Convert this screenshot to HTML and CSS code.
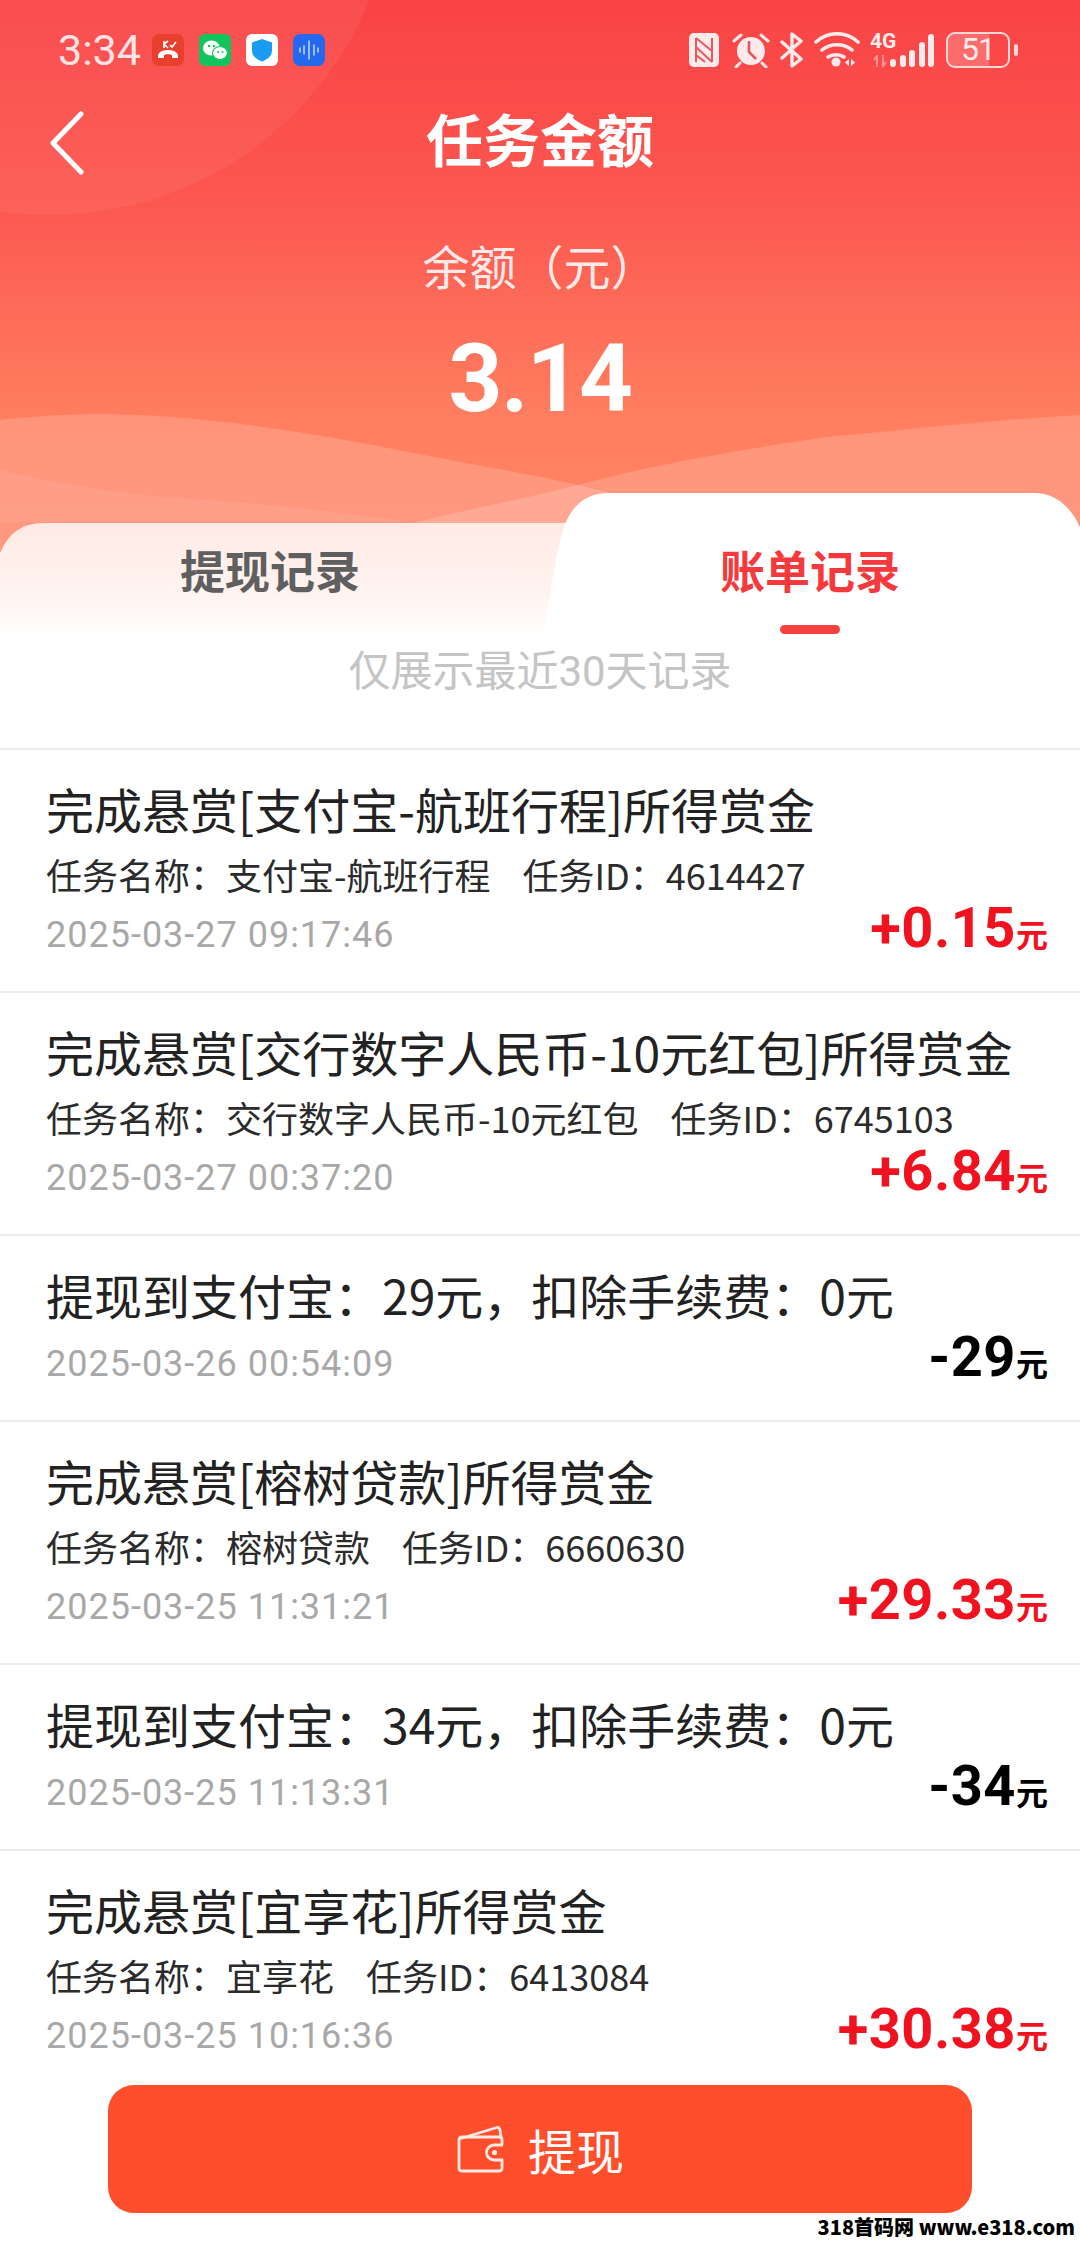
FILE: index.html
```html
<!DOCTYPE html>
<html lang="zh">
<head>
  <meta charset="UTF-8" />
  <title>任务金额</title>
  <link rel="stylesheet" href="styles.css">
</head>
<body>
  <div class="page">
    <header class="hero">
      <svg class="hero-bg" width="1080" height="640" viewBox="0 0 1080 640">
        <defs>
          <linearGradient id="heroGrad" x1="0" y1="0" x2="0" y2="1">
            <stop offset="0" stop-color="#f94345"/>
            <stop offset="0.31" stop-color="#fc5750"/>
            <stop offset="0.66" stop-color="#ff7f60"/>
            <stop offset="1" stop-color="#ff8a6c"/>
          </linearGradient>
          <linearGradient id="tabGrad" x1="0" y1="0" x2="0" y2="1">
            <stop offset="0" stop-color="#fff" stop-opacity="0.8"/>
            <stop offset="0.6" stop-color="#fff" stop-opacity="0.88"/>
            <stop offset="1" stop-color="#fff" stop-opacity="1"/>
          </linearGradient>
        </defs>
        <rect width="1080" height="640" fill="url(#heroGrad)"/>
        <circle cx="50" cy="-130" r="345" fill="#fff" fill-opacity="0.055"/>
        <path d="M0 420C60 413 120 413 172 417C260 424 340 438 413 453C470 464 530 474 578 485C620 495 680 510 720 530V640H0Z" fill="#fff" fill-opacity="0.17"/>
        <path d="M0 470C70 488 140 496 207 500C280 505 350 514 413 522H0Z" fill="#fff" fill-opacity="0.07"/>
        <path d="M1080 415C990 420 905 430 826 437C740 450 650 465 578 485C520 500 465 510 413 523H1080Z" fill="#fff" fill-opacity="0.17"/>
        <path d="M0 640V553C8 535 20 523 44 523H566V640Z" fill="url(#tabGrad)"/>
        <path d="M543 640C550 600 554 560 563 530C571 505 586 493 610 493H1034C1058 493 1072 510 1080 527V640Z" fill="#fff"/>
      </svg>

      <div class="status">
        <div class="status-left">
          <span class="time">3:34</span>
          <svg class="app-icon" width="32" height="32" viewBox="0 0 32 32">
            <rect width="32" height="32" rx="7" fill="#e8402c"/>
            <path d="M6 22c0-8 20-8 20 0v2h-6v-3c-2-1-6-1-8 0v3H6z" fill="#fff"/>
            <path d="M12 7v7M12 10l4-3M12 10l4 4M18 11l2 2 4-5" stroke="#fff" stroke-width="1.6" fill="none"/>
          </svg>
          <svg class="app-icon" width="32" height="32" viewBox="0 0 32 32">
            <rect width="32" height="32" rx="6" fill="#12c45c"/>
            <ellipse cx="12.5" cy="14" rx="8.5" ry="7.5" fill="#fff"/>
            <ellipse cx="21" cy="19" rx="7.5" ry="6.5" fill="#fff" stroke="#12c45c" stroke-width="1.2"/>
            <circle cx="10" cy="12" r="1.2" fill="#12c45c"/>
            <circle cx="15" cy="12" r="1.2" fill="#12c45c"/>
            <circle cx="19" cy="18" r="1" fill="#12c45c"/>
            <circle cx="23.5" cy="18" r="1" fill="#12c45c"/>
          </svg>
          <svg class="app-icon" width="32" height="32" viewBox="0 0 32 32">
            <rect width="32" height="32" rx="6" fill="#fff"/>
            <path d="M16 5l10 3.5v8c0 6-5 9-10 11-5-2-10-5-10-11v-8z" fill="#1a9cf0"/>
          </svg>
          <svg class="app-icon" width="32" height="32" viewBox="0 0 32 32">
            <rect width="32" height="32" rx="7" fill="#2468ee"/>
            <path d="M7 14v4M11 12v8M16 7v18M21 11v10M25 14v4" stroke="#cfe0ff" stroke-width="1.4" stroke-linecap="round"/>
          </svg>
        </div>
        <div class="status-right">
          <svg class="nfc" width="30" height="34" viewBox="0 0 30 34">
            <rect width="30" height="34" rx="5" fill="#fdeaea"/>
            <path d="M7 5v24M23 5v24M7 5l16 13M7 14l16 15M7 22l9 7" stroke="#e9575a" stroke-width="2" fill="none"/>
          </svg>
          <svg width="38" height="36" viewBox="0 0 38 36">
            <circle cx="19" cy="19" r="14" fill="#fdeaea"/>
            <path d="M17 9v11l7 7" stroke="#e9575a" stroke-width="2.6" fill="none"/>
            <path d="M2 9l7-6M36 9l-7-6M8 31l-4 4M30 31l4 4" stroke="#fdeaea" stroke-width="3" stroke-linecap="round"/>
          </svg>
          <svg width="24" height="36" viewBox="0 0 24 36">
            <path d="M2 26L21 9 12 2v32l9-7L2 10" stroke="#fdeaea" stroke-width="3.4" fill="none" stroke-linejoin="round" stroke-linecap="round"/>
          </svg>
          <svg width="46" height="36" viewBox="0 0 46 36">
            <path d="M2 10c12-11 30-11 42 0M8 18c8-7 22-7 30 0M14 25c4-3 12-3 16 0" stroke="#fdeaea" stroke-width="3.6" fill="none" stroke-linecap="round"/>
            <circle cx="22" cy="30" r="4.5" fill="#fdeaea"/>
            <path d="M35 27v7l-4-3.5zM37 27v7l4-3.5z" fill="#fdeaea"/>
          </svg>
          <div class="signal">
            <span class="net-label">4G</span>
            <svg class="net-arrows" width="14" height="12" viewBox="0 0 14 12">
              <path d="M4 12V1L1 5M10 0v11l3-4" stroke="#fdeaea" stroke-width="2" fill="none"/>
            </svg>
            <div class="bars">
              <i class="bar bar-1"></i><i class="bar bar-2"></i><i class="bar bar-3"></i><i class="bar bar-4"></i><i class="bar bar-5"></i>
            </div>
          </div>
          <div class="battery">
            <div class="battery-body">
              <span class="battery-level"></span>
              <span class="battery-num">51</span>
            </div>
            <i class="battery-nub"></i>
          </div>
        </div>
      </div>

      <div class="nav">
        <svg class="back" width="36" height="64" viewBox="0 0 36 64">
          <path d="M32 3L4 32l28 29" stroke="#fff" stroke-width="5" fill="none" stroke-linecap="round" stroke-linejoin="round"/>
        </svg>
        <h1>任务金额</h1>
      </div>

      <div class="balance">
        <div class="balance-label">余额（元）</div>
        <div class="balance-num">3.14</div>
      </div>

      <div class="tabs">
        <div class="tab">提现记录</div>
        <div class="tab tab-active">账单记录<i class="tab-line"></i></div>
      </div>
    </header>

    <div class="hint">仅展示最近30天记录</div>

    <div class="list">
      <div class="row">
        <div class="row-title">完成悬赏[支付宝-航班行程]所得赏金</div>
        <div class="row-sub"><span>任务名称：支付宝-航班行程</span><span>任务ID：4614427</span></div>
        <div class="row-foot"><span class="row-date">2025-03-27 09:17:46</span><span class="amount plus">+0.15<small>元</small></span></div>
      </div>
      <div class="row">
        <div class="row-title">完成悬赏[交行数字人民币-10元红包]所得赏金</div>
        <div class="row-sub"><span>任务名称：交行数字人民币-10元红包</span><span>任务ID：6745103</span></div>
        <div class="row-foot"><span class="row-date">2025-03-27 00:37:20</span><span class="amount plus">+6.84<small>元</small></span></div>
      </div>
      <div class="row">
        <div class="row-title">提现到支付宝：29元，扣除手续费：0元</div>
        <div class="row-foot"><span class="row-date">2025-03-26 00:54:09</span><span class="amount">-29<small>元</small></span></div>
      </div>
      <div class="row">
        <div class="row-title">完成悬赏[榕树贷款]所得赏金</div>
        <div class="row-sub"><span>任务名称：榕树贷款</span><span>任务ID：6660630</span></div>
        <div class="row-foot"><span class="row-date">2025-03-25 11:31:21</span><span class="amount plus">+29.33<small>元</small></span></div>
      </div>
      <div class="row">
        <div class="row-title">提现到支付宝：34元，扣除手续费：0元</div>
        <div class="row-foot"><span class="row-date">2025-03-25 11:13:31</span><span class="amount">-34<small>元</small></span></div>
      </div>
      <div class="row">
        <div class="row-title">完成悬赏[宜享花]所得赏金</div>
        <div class="row-sub"><span>任务名称：宜享花</span><span>任务ID：6413084</span></div>
        <div class="row-foot"><span class="row-date">2025-03-25 10:16:36</span><span class="amount plus">+30.38<small>元</small></span></div>
      </div>
    </div>

    <div class="withdraw">
      <svg width="50" height="48" viewBox="0 0 50 48">
        <path d="M3 14L41 2.5Q43 2 44 5L45 12" stroke="#ffe9e2" stroke-width="2.8" fill="none" stroke-linejoin="round"/>
        <path d="M46 20V15Q46 12 43 12H6Q3 12 3 15V43Q3 46 6 46H43Q46 46 46 43V35H38A7.5 7.5 0 0 1 38 20H47" stroke="#ffe9e2" stroke-width="2.8" fill="none"/>
        <circle cx="38.5" cy="27.5" r="2.6" fill="#ffe9e2"/>
      </svg>
      <span>提现</span>
    </div>
    <div class="watermark">318首码网 www.e318.com</div>
  </div>
</body>
</html>
```

FILE: styles.css
```css
* {
  box-sizing: border-box;
}
html, body {
  margin: 0;
  padding: 0;
}
body {
  font-family: Roboto, "Noto Sans CJK SC", sans-serif;
  background: #fff;
}
.page {
  position: relative;
  width: 1080px;
  height: 2244px;
  overflow: hidden;
  background: #fff;
}
.hero {
  position: relative;
  height: 640px;
}
.hero-bg {
  position: absolute;
  top: 0;
  left: 0;
}
.status, .nav, .balance, .tabs {
  position: relative;
}
.status {
  height: 100px;
  padding: 32px 62px 0 58px;
  display: flex;
  justify-content: space-between;
  align-items: flex-start;
}
.status-left {
  display: flex;
  align-items: center;
  gap: 15px;
  height: 36px;
}
.time {
  font-size: 43px;
  line-height: 36px;
  color: #ffe4e4;
  margin-right: -3px;
  width: 82px;
}
.status-right {
  display: flex;
  align-items: center;
  gap: 10px;
  height: 36px;
}
.nfc {
  margin-right: 3px;
}
.signal {
  position: relative;
  width: 64px;
  height: 36px;
}
.net-label {
  position: absolute;
  left: 0;
  top: -2px;
  font-size: 21px;
  line-height: 22px;
  font-weight: 700;
  color: #fdeaea;
}
.net-arrows {
  position: absolute;
  left: 3px;
  bottom: 1px;
  opacity: 0.45;
}
.bars {
  position: absolute;
  right: 0;
  bottom: 1px;
  display: flex;
  align-items: flex-end;
  gap: 3.5px;
}
.bar {
  display: block;
  width: 6px;
  background: #fdeaea;
  border-radius: 3px;
}
.bar-1 { height: 8px; }
.bar-2 { height: 12px; }
.bar-3 { height: 17px; }
.bar-4 { height: 25px; }
.bar-5 { height: 33px; }
.battery {
  display: flex;
  align-items: center;
  gap: 4px;
  margin-left: 2px;
}
.battery-body {
  position: relative;
  width: 64px;
  height: 36px;
  border: 2.5px solid #fbd7d7;
  border-radius: 9px;
  text-align: center;
}
.battery-level {
  position: absolute;
  left: 0;
  top: 0;
  bottom: 0;
  width: 41px;
  border-radius: 6px 0 0 6px;
  background: rgba(255, 255, 255, 0.2);
}
.battery-num {
  position: relative;
  display: block;
  font-size: 32px;
  line-height: 31px;
  letter-spacing: -1px;
  color: #fdeaea;
}
.battery-nub {
  width: 4px;
  height: 12px;
  background: #fbd7d7;
  border-radius: 2px;
}
.nav {
  height: 80px;
}
.back {
  position: absolute;
  left: 49px;
  top: 11px;
}
.nav h1 {
  margin: 0;
  padding-top: 3px;
  text-align: center;
  font-size: 57px;
  line-height: 80px;
  font-weight: 700;
  color: #fff;
}
.balance {
  text-align: center;
  padding-top: 59px;
}
.balance-label {
  font-size: 47px;
  line-height: 60px;
  color: rgba(255, 255, 255, 0.88);
}
.balance-num {
  margin-top: 30px;
  font-size: 94px;
  line-height: 100px;
  letter-spacing: -1.5px;
  font-weight: 700;
  color: #fff;
}
.tabs {
  position: absolute;
  left: 0;
  right: 0;
  top: 523px;
  display: flex;
}
.tab {
  width: 540px;
  text-align: center;
  font-size: 45px;
  line-height: 102px;
  font-weight: 700;
  color: #5f5f5f;
  position: relative;
}
.tab-active {
  color: #f5393d;
}
.tab-line {
  position: absolute;
  left: 240px;
  top: 102px;
  width: 60px;
  height: 9px;
  border-radius: 5px;
  background: #f5423f;
}
.hint {
  text-align: center;
  font-size: 42px;
  line-height: 60px;
  margin-top: 2px;
  color: #c4c4c4;
}
.list {
  margin-top: 46px;
  border-top: 2px solid #ececec;
}
.row {
  padding: 26px 32px 42px 46px;
  border-bottom: 2px solid #ececec;
}
.row:last-child {
  border-bottom: none;
}
.row-title {
  font-family: "Noto Sans CJK SC", sans-serif;
  font-size: 48px;
  line-height: 64px;
  color: #222;
}
.row-sub {
  font-family: "Noto Sans CJK SC", sans-serif;
  display: flex;
  gap: 32px;
  font-size: 36px;
  line-height: 46px;
  margin-top: 11px;
  color: #2b2b2b;
}
.row-foot {
  display: flex;
  justify-content: space-between;
  align-items: baseline;
  height: 42px;
  margin-top: 10px;
}
.row-date {
  font-size: 36px;
  line-height: 42px;
  letter-spacing: 1px;
  color: #a8a8a8;
}
.amount {
  font-size: 56px;
  line-height: 42px;
  letter-spacing: 0.5px;
  font-weight: 700;
  color: #000;
}
.amount small {
  font-size: 32px;
  letter-spacing: 0;
}
.plus {
  color: #f0121f;
}
.withdraw {
  position: absolute;
  left: 108px;
  top: 2085px;
  width: 864px;
  height: 128px;
  border-radius: 26px;
  background: #ff4e2c;
  color: #fff;
  font-size: 48px;
  display: flex;
  align-items: center;
  justify-content: center;
  gap: 22px;
}
.watermark {
  position: absolute;
  right: 5px;
  bottom: 5px;
  font-family: "Noto Sans CJK SC", sans-serif;
  font-size: 20px;
  line-height: 24px;
  font-weight: 900;
  color: #000;
}
```
